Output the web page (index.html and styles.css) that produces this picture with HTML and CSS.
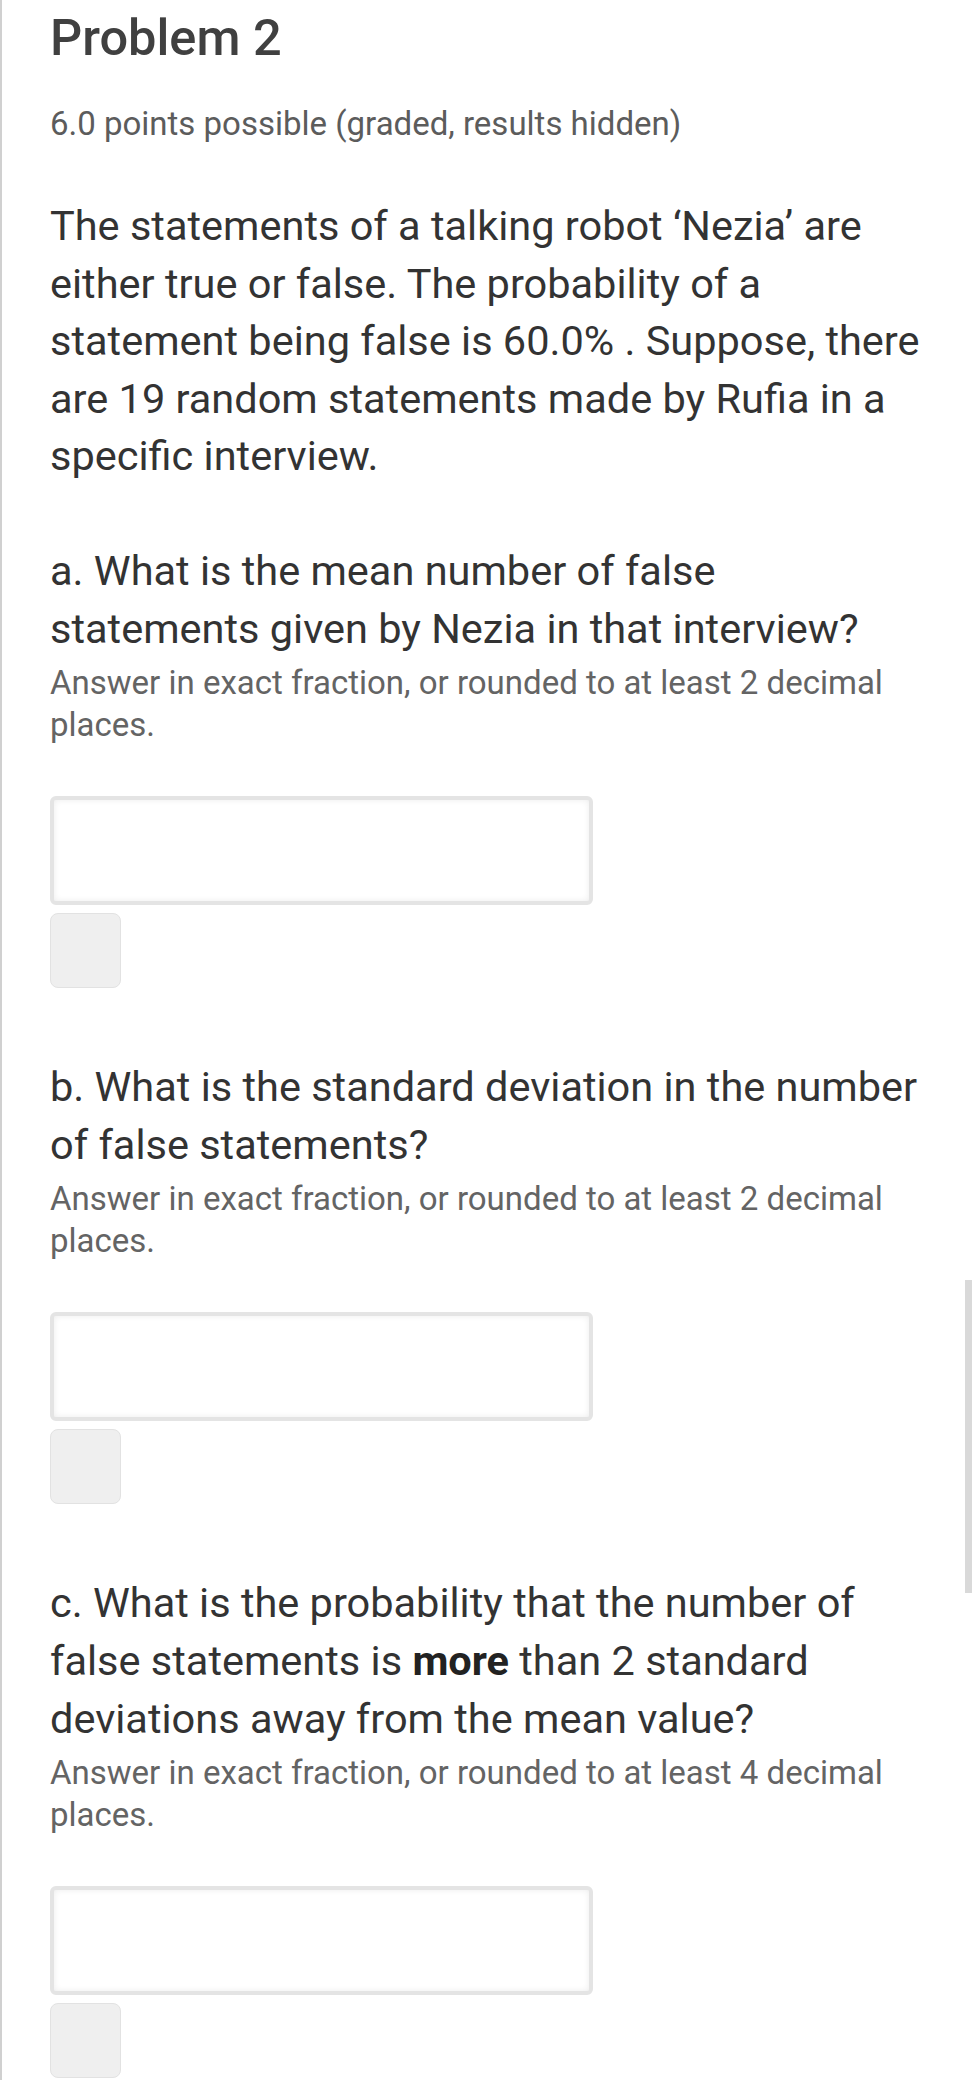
FILE: index.html
```html
<!DOCTYPE html>
<html lang="en">
<head>
<meta charset="utf-8">
<title>Problem 2</title>
<link rel="stylesheet" href="styles.css">
</head>
<body>
<div class="page">
  <h2 class="title">Problem 2</h2>
  <div class="points">6.0 points possible (graded, results hidden)</div>
  <p class="statement">The statements of a talking robot ‘Nezia’ are<br>either true or false. The probability of a<br>statement being false is 60.0% . Suppose, there<br>are 19 random statements made by Rufia in a<br>specific interview.</p>

  <div class="part part-a">
    <p class="question">a. What is the mean number of false<br>statements given by Nezia in that interview?</p>
    <p class="hint">Answer in exact fraction, or rounded to at least 2 decimal<br>places.</p>
    <div class="answer"></div>
    <div class="btn"></div>
  </div>

  <div class="part">
    <p class="question">b. What is the standard deviation in the number<br>of false statements?</p>
    <p class="hint">Answer in exact fraction, or rounded to at least 2 decimal<br>places.</p>
    <div class="answer"></div>
    <div class="btn"></div>
  </div>

  <div class="part">
    <p class="question">c. What is the probability that the number of<br>false statements is <b>more</b> than 2 standard<br>deviations away from the mean value?</p>
    <p class="hint">Answer in exact fraction, or rounded to at least 4 decimal<br>places.</p>
    <div class="answer"></div>
    <div class="btn"></div>
  </div>
</div>
<div class="scrollbar"></div>
</body>
</html>
```
FILE: styles.css
```css
html, body {
  margin: 0;
  padding: 0;
  background: #ffffff;
}

body {
  font-family: Roboto, "Noto Sans", "Liberation Sans", sans-serif;
  color: #333333;
  height: 2080px;
  overflow: hidden;
  position: relative;
}

.page {
  border-left: 2px solid #d0d0d0;
  padding: 8px 0 0 48px;
  min-height: 2080px;
  box-sizing: border-box;
  width: 960px;
}

.title {
  margin: 0;
  font-size: 50.5px;
  line-height: 60px;
  font-weight: 500;
  color: #404040;
}

.points {
  margin-top: 36px;
  font-size: 33px;
  line-height: 40px;
  color: #5c5c5c;
}

.statement {
  margin: 53px 0 0;
  font-size: 41.5px;
  line-height: 57.5px;
  color: #333333;
}

.part {
  margin-top: 70px;
}

.part-a {
  margin-top: 57.5px;
}

.question {
  margin: 0;
  font-size: 41.5px;
  line-height: 58px;
  color: #333333;
}

.question b {
  font-weight: 700;
  color: #222222;
}

.hint {
  margin: 4px 0 0;
  font-size: 33px;
  line-height: 42px;
  color: #646464;
}

.answer {
  margin-top: 50px;
  width: 543px;
  height: 109px;
  box-sizing: border-box;
  border: 4px solid #e4e4e4;
  border-radius: 6px;
  background: #ffffff;
  box-shadow: inset 0 0 6px rgba(0, 0, 0, 0.08);
}

.btn {
  margin-top: 8px;
  width: 71px;
  height: 75px;
  box-sizing: border-box;
  border: 1px solid #e2e2e2;
  border-radius: 8px;
  background: #efefef;
}

.scrollbar {
  position: absolute;
  right: 0;
  top: 1280px;
  width: 7px;
  height: 313px;
  background: #d9d9d9;
}
```
